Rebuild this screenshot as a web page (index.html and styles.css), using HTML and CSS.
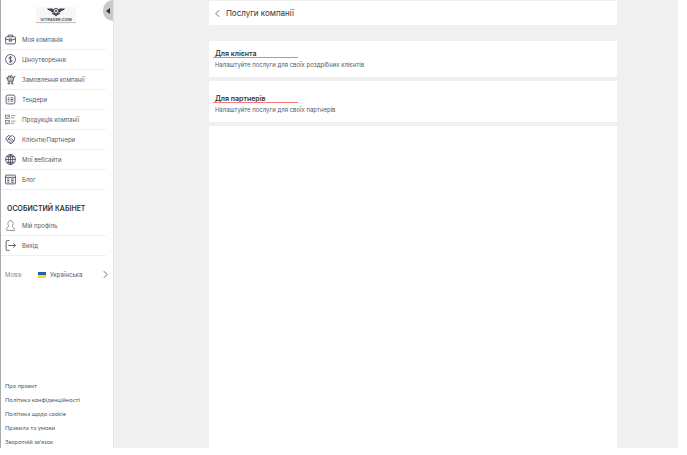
FILE: index.html
```html
<!DOCTYPE html>
<html lang="uk">
<head>
    <meta charset="UTF-8">
    <meta name="viewport" content="width=device-width, initial-scale=1.0">
    <title>Послуги компанії</title>
    <link rel="stylesheet" href="styles.css">
</head>
<body>
    <div class="layout">
        <aside class="sidebar">
            <a class="logo" href="#">
                <svg class="logo-wings" viewBox="0 0 36 20" aria-hidden="true">
                    <path d="M0 3h11l3 3a6 6 0 0 0-1 5l-4-1-1-2H6L4 6H2z"/>
                    <path d="M36 3H25l-3 3a6 6 0 0 1 1 5l4-1 1-2h2l2-2h2z"/>
                    <path d="M9 11l5 1 4 3 4-3 5-1-3 4-3 1-3 3-3-3-3-1z"/>
                    <circle cx="18" cy="8" r="5" class="logo-ring"/>
                    <circle cx="18" cy="8" r="2"/>
                </svg>
                <span class="logo-name">VITRADER.COM</span>
                <span class="logo-rule"></span>
            </a>
            <button class="collapse" type="button" aria-label="Згорнути меню">
                <svg viewBox="0 0 4 6"><path d="M4 0v6L0 3z"/></svg>
            </button>

            <nav class="menu">
                <a class="menu-item" href="#">
                    <svg class="icon" viewBox="0 0 20 20"><rect x="1" y="5" width="18" height="13" rx="2"/><path d="M6 5V2h8v3M1 9l7 2M19 9l-7 2"/><rect x="8" y="9" width="4" height="4"/></svg>
                    Моя компанія
                </a>
                <a class="menu-item" href="#">
                    <svg class="icon" viewBox="0 0 20 20"><circle cx="10" cy="10" r="9"/><path d="M13 7c-1-2-6-2-6 .5S13 10 13 12.500s-5 2.500-6 .5M10 4v12"/></svg>
                    Ціноутворення
                </a>
                <a class="menu-item" href="#">
                    <svg class="icon" viewBox="0 0 20 20"><path d="M2 7h14l-2 7H6L4 7M16 7l1-3h2M5 7l2-4 3 3 1-4 4 5M6 11h9"/><circle cx="7" cy="17" r="1.500"/><circle cx="13" cy="17" r="1.500"/></svg>
                    Замовлення компанії
                </a>
                <a class="menu-item" href="#">
                    <svg class="icon" viewBox="0 0 20 20"><rect x="2" y="2" width="16" height="16" rx="3"/><path d="M5 7h3M10 7h5M5 10h3M10 10h5M5 13h3M10 13h5"/></svg>
                    Тендери
                </a>
                <a class="menu-item" href="#">
                    <svg class="icon icon-thin" viewBox="0 0 20 20"><rect x="1" y="2" width="7" height="6"/><rect x="1" y="12" width="7" height="6"/><path d="M3 5l2 1 2-3M3 15l2 1 2-3M11 3h8M11 7h6M11 13h8M11 17h6"/></svg>
                    Продукція компанії
                </a>
                <a class="menu-item" href="#">
                    <svg class="icon" viewBox="0 0 20 20"><path d="M2 7l4-4 4 1 4-1 4 4-2 6-5 5-6-4-3-4zM6 9l4-5M6 9c2 2 4 0 5-1l5 5M8 13l3 3M4 11l3-1M10 11l4 4"/></svg>
                    Клієнти/Партнери
                </a>
                <a class="menu-item" href="#">
                    <svg class="icon" viewBox="0 0 20 20"><circle cx="10" cy="10" r="9"/><ellipse cx="10" cy="10" rx="4" ry="9"/><path d="M10 1v18M1 10h18M3 5h14M3 15h14"/></svg>
                    Мої вебсайти
                </a>
                <a class="menu-item" href="#">
                    <svg class="icon" viewBox="0 0 20 20"><rect x="1" y="2" width="18" height="16" rx="1"/><path d="M1 6h18M4 9h4M4 12h4M4 15h4M11 9h5M11 12h5M11 15h5"/></svg>
                    Блог
                </a>
            </nav>

            <h2 class="menu-title">ОСОБИСТИЙ КАБІНЕТ</h2>
            <nav class="menu">
                <a class="menu-item" href="#">
                    <svg class="icon icon-thin" viewBox="0 0 20 20"><path d="M7 11C4 8 5 1 10 1s6 7 3 10c0 2 4 2 4 5v3H3v-3c0-3 4-3 4-5z"/></svg>
                    Мій профіль
                </a>
                <a class="menu-item" href="#">
                    <svg class="icon" viewBox="0 0 20 20"><path d="M8 1H4a2 2 0 0 0-2 2v14a2 2 0 0 0 2 2h4M6 10h13M15 6l4 4-4 4"/></svg>
                    Вихід
                </a>
            </nav>

            <div class="language">
                <span class="language-label">Мова:</span>
                <button class="language-button" type="button">
                    <span class="flag"></span>
                    Українська
                    <svg class="chevron" viewBox="0 0 6 10"><path d="M1 1l4 4-4 4"/></svg>
                </button>
            </div>

            <div class="links">
                <a href="#">Про проект</a>
                <a href="#">Політика конфіденційності</a>
                <a href="#">Політика щодо cookie</a>
                <a href="#">Правила та умови</a>
                <a href="#">Зворотній зв'язок</a>
            </div>
        </aside>

        <main class="content">
            <header class="page-header">
                <a class="back" href="#" aria-label="Назад">
                    <svg class="chevron" viewBox="0 0 6 10"><path d="M5 1L1 5l4 4"/></svg>
                </a>
                <h1>Послуги компанії</h1>
            </header>
            <a class="card" href="#">
                <h3 class="card-title">Для клієнта</h3>
                <p>Налаштуйте послуги для своїх роздрібних клієнтів</p>
            </a>
            <a class="card card-partners" href="#">
                <h3 class="card-title">Для партнерів</h3>
                <p>Налаштуйте послуги для своїх партнерів</p>
            </a>
            <div class="panel"></div>
        </main>
    </div>
</body>
</html>
```

FILE: styles.css
```css
* {
    box-sizing: border-box;
}

body {
    margin: 0;
    padding: 0 9px 7px 0;
    background-color: #fff;
    color: #545b66;
    font-family: Inter, "Open Sans", sans-serif;
    font-size: 6px;
    line-height: 11px;
}

h1, h2, h3, p {
    margin: 0;
}

a {
    color: inherit;
    text-decoration: none;
}

button {
    padding: 0;
    border: 0;
    background: none;
    color: inherit;
    font: inherit;
    cursor: pointer;
}

.layout {
    display: flex;
    min-height: calc(100vh - 7px);
    background-color: #f0f0f0;
}

/* sidebar */

.sidebar {
    position: relative;
    display: flex;
    flex-direction: column;
    flex: 0 0 114px;
    border-left: 1px solid #aaa;
    border-right: 1px solid #e4e4e4;
    background-color: #fff;
}

.logo {
    display: flex;
    flex-direction: column;
    align-items: center;
    align-self: center;
    width: 40px;
    height: 17px;
    margin: 7px 2px 6px 0;
    background-color: #f7f7f7;
}

.logo-wings {
    width: 18px;
    height: 10px;
    fill: #3d424b;
}

.logo-ring {
    fill: #f7f7f7;
    stroke: #3d424b;
    stroke-width: 2;
}

.logo-name {
    color: #555a63;
    font-size: 4px;
    font-weight: 700;
    line-height: 5px;
}

.logo-rule {
    width: 100%;
    height: 1px;
    background-color: #c4c4c4;
}

.collapse {
    position: absolute;
    top: 0;
    right: 0;
    width: 10px;
    height: 21px;
    border-radius: 10px 0 0 10px;
    background-color: #c9c9c9;
    line-height: 0;
}

.collapse svg {
    width: 4px;
    height: 6px;
    fill: #333;
}

.menu-item {
    display: flex;
    align-items: center;
    gap: 6px;
    height: 20px;
    margin-right: 7px;
    padding-left: 4px;
    border-bottom: 1px solid #f0f0f0;
}

.icon {
    width: 11px;
    height: 11px;
    fill: none;
    stroke: #3d4456;
    stroke-width: 1.5;
}

.icon-thin {
    stroke-width: 1;
}

.menu-title {
    margin-top: 13px;
    padding: 0 0 2px 6px;
    color: #333;
    font-size: 7px;
    font-weight: 600;
}

.language {
    display: flex;
    align-items: center;
    margin: 13px 5px 0 4px;
}

.language-label {
    width: 33px;
    color: #858a92;
}

.language-button {
    display: flex;
    align-items: center;
    flex: 1;
    gap: 4px;
}

.flag {
    width: 8px;
    height: 6px;
    background: linear-gradient(#1f5fb0 50%, #ffd91a 50%);
}

.chevron {
    width: 5px;
    height: 9px;
    fill: none;
    stroke: #4a5265;
    stroke-width: 1;
}

.language-button .chevron {
    margin-left: auto;
}

.links {
    display: flex;
    flex-direction: column;
    gap: 2px;
    margin-top: auto;
    padding-left: 4px;
    font-family: Lato, "Open Sans", sans-serif;
    line-height: 12px;
}

/* content */

.content {
    display: flex;
    flex-direction: column;
    flex: 1;
    gap: 4px;
    padding: 1px 9% 0 14%;
}

.page-header {
    display: flex;
    align-items: center;
    gap: 6px;
    height: 24px;
    margin-bottom: 12px;
    padding-left: 6px;
    border-radius: 1px;
    background-color: #fff;
    color: #333;
}

.page-header h1 {
    font-size: 8px;
    font-weight: 400;
}

.back {
    display: flex;
}

.card {
    padding: 7px 6px;
    background-color: #fff;
}

.card-partners {
    padding-top: 12px;
}

.card-title {
    position: relative;
    width: max-content;
    color: #333;
    font-size: 7px;
    font-weight: 600;
}

/* red marker under the title, longer than its text */
.card-title::after {
    content: "";
    position: absolute;
    left: -2px;
    bottom: 1px;
    width: 85px;
    height: 1px;
    background-color: #f77;
}

.panel {
    flex: 1;
    background-color: #fff;
}
```
